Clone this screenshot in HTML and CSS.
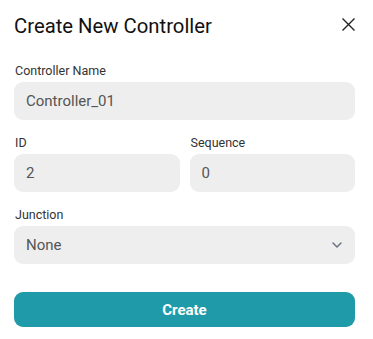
FILE: index.html
```html
<!DOCTYPE html>
<html>
<head>
<meta charset="utf-8">
<link rel="stylesheet" href="styles.css">
</head>
<body>
<div class="dialog">
  <div class="header">
    <h1 class="title">Create New Controller</h1>
    <button class="close" aria-label="Close">
      <svg width="13" height="13" viewBox="0 0 13 13"><path d="M0.5 0.5 L12.5 12.5 M12.5 0.5 L0.5 12.5" stroke="#222" stroke-width="1.4" fill="none"/></svg>
    </button>
  </div>
  <div class="field">
    <label class="label">Controller Name</label>
    <div class="input">Controller_01</div>
  </div>
  <div class="row">
    <div class="field">
      <label class="label">ID</label>
      <div class="input">2</div>
    </div>
    <div class="field">
      <label class="label">Sequence</label>
      <div class="input">0</div>
    </div>
  </div>
  <div class="field">
    <label class="label">Junction</label>
    <div class="input select">
      <span>None</span>
      <svg width="10" height="6" viewBox="0 0 10 6"><path d="M1 1 L5 5 L9 1" stroke="#6b7280" stroke-width="1.5" fill="none" stroke-linecap="round" stroke-linejoin="round"/></svg>
    </div>
  </div>
  <button class="create">Create</button>
</div>
</body>
</html>
```
FILE: styles.css
```css
* { box-sizing: border-box; }
html, body { margin: 0; padding: 0; background: #fff; }
body { font-family: Roboto, "Liberation Sans", sans-serif; }
.dialog {
  width: 373px;
  padding: 14px 18px 0 14px;
  display: flex;
  flex-direction: column;
}
.header {
  display: flex;
  justify-content: space-between;
  align-items: center;
  height: 24px;
  margin-bottom: 25px;
}
.title {
  margin: 0;
  font-size: 20.3px;
  font-weight: 400;
  color: #111;
  line-height: 24px;
}
.close {
  border: 0;
  background: none;
  padding: 0;
  width: 13px;
  height: 13px;
  display: flex;
  margin-top: -3px;
}
.field { display: flex; flex-direction: column; margin-bottom: 15px; flex: 1; min-width: 0; }
.label {
  font-size: 12.5px;
  line-height: 16px;
  color: #333;
  margin-bottom: 3px;
  padding-left: 1px;
}
.input {
  height: 38px;
  background: #eeeeee;
  border-radius: 9px;
  padding: 0 12px;
  display: flex;
  align-items: center;
  font-size: 15px;
  color: #555;
}
.row { display: flex; gap: 10px; }
.select { justify-content: space-between; padding-right: 13px; }
.create {
  margin-top: 13px;
  height: 35px;
  border: 0;
  border-radius: 9px;
  background: #1e9aa8;
  color: #fff;
  font-family: Roboto, "Liberation Sans", sans-serif;
  font-weight: 700;
  font-size: 15px;
}
```
